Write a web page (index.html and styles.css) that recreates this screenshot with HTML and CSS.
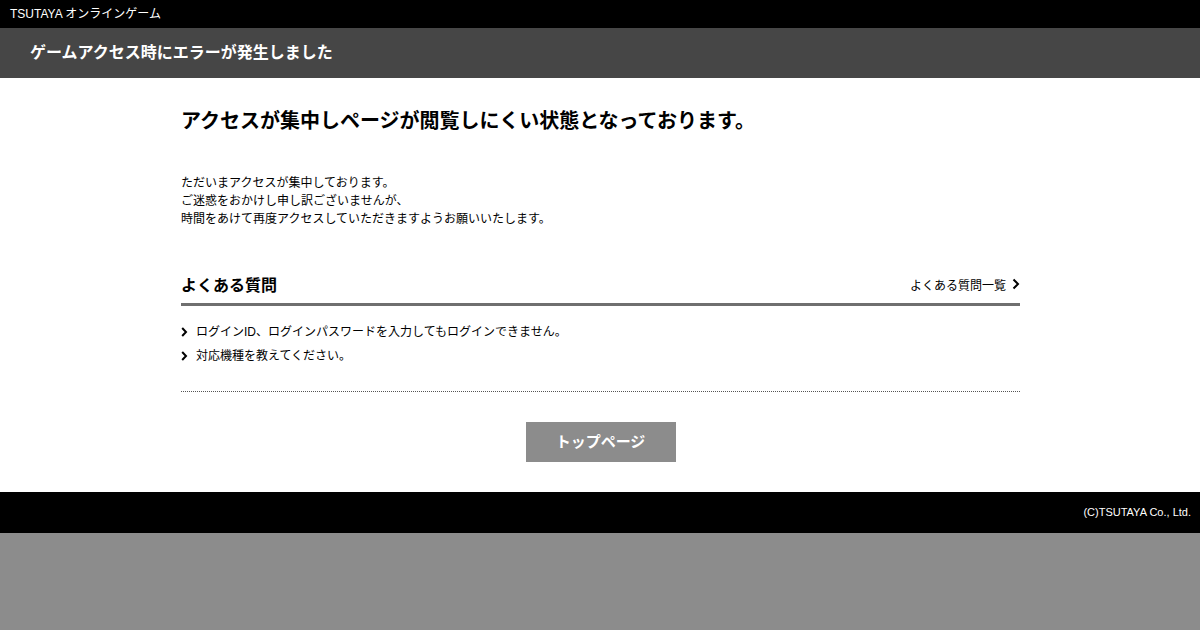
FILE: index.html
```html
<!DOCTYPE html>
<html lang="ja">
<head>
    <meta charset="UTF-8">
    <title>ゲームアクセス時にエラーが発生しました</title>
    <link rel="stylesheet" href="styles.css">
</head>
<body>
    <div class="topbar">TSUTAYA オンラインゲーム</div>
    <div class="page-title">ゲームアクセス時にエラーが発生しました</div>

    <div class="main">
        <div class="container">
            <h1 class="lead">アクセスが集中しページが閲覧しにくい状態となっております。</h1>
            <p class="message">
                ただいまアクセスが集中しております。<br>
                ご迷惑をおかけし申し訳ございませんが、<br>
                時間をあけて再度アクセスしていただきますようお願いいたします。
            </p>

            <div class="faq">
                <div class="faq-head">
                    <h2>よくある質問</h2>
                    <a class="more" href="#">よくある質問一覧
                        <svg width="8" height="12" viewBox="0 0 8 12"><path d="M1.5 1.5 6 6l-4.5 4.5" fill="none" stroke="#000" stroke-width="2"/></svg>
                    </a>
                </div>
                <ul class="faq-list">
                    <li><svg width="7" height="10" viewBox="0 0 7 10"><path d="M1.2 1 5 5 1.2 9" fill="none" stroke="#000" stroke-width="2"/></svg>ログインID、ログインパスワードを入力してもログインできません。</li>
                    <li><svg width="7" height="10" viewBox="0 0 7 10"><path d="M1.2 1 5 5 1.2 9" fill="none" stroke="#000" stroke-width="2"/></svg>対応機種を教えてください。</li>
                </ul>
            </div>

            <div class="btn-area">
                <a class="btn" href="#">トップページ</a>
            </div>
        </div>
    </div>

    <div class="footer">(C)TSUTAYA Co., Ltd.</div>
</body>
</html>
```

FILE: styles.css
```css
* {
    margin: 0;
    padding: 0;
    box-sizing: border-box;
}

body {
    font-family: "Liberation Sans", Arial, "Noto Sans CJK JP", sans-serif;
    background: #8c8c8c;
    color: #000;
}

.topbar {
    background: #000;
    color: #fff;
    font-size: 12px;
    height: 28px;
    line-height: 28px;
    padding-left: 10px;
}

.page-title {
    background: #464646;
    color: #fff;
    font-size: 16px;
    font-weight: bold;
    height: 50px;
    line-height: 50px;
    padding-left: 30px;
}

.main {
    background: #fff;
    padding: 28px 0 30px;
}

.container {
    width: 839px;
    margin: 0 0 0 181px;
}

.lead {
    font-size: 20px;
    font-weight: bold;
    line-height: 30px;
}

.message {
    margin-top: 38px;
    font-size: 12px;
    line-height: 18px;
}

.faq {
    margin-top: 45px;
    border-bottom: 1px dotted #555;
    padding-bottom: 23px;
}

.faq-head {
    display: flex;
    justify-content: space-between;
    align-items: center;
    border-bottom: 3px solid #6f6f6f;
    height: 33px;
    padding-bottom: 8px;
}

.faq-head h2 {
    font-size: 16px;
    font-weight: bold;
}

.more {
    color: #000;
    text-decoration: none;
    font-size: 12px;
    display: flex;
    align-items: center;
    gap: 6px;
}

.faq-list {
    list-style: none;
    margin-top: 14px;
}

.faq-list li {
    font-size: 12px;
    line-height: 24px;
    display: flex;
    align-items: center;
    gap: 8px;
}

.btn-area {
    display: flex;
    justify-content: center;
    margin-top: 30px;
}

.btn {
    display: block;
    width: 150px;
    height: 40px;
    line-height: 40px;
    text-align: center;
    background: #8c8c8c;
    color: #fff;
    font-size: 15px;
    font-weight: bold;
    text-decoration: none;
}

.footer {
    background: #000;
    color: #fff;
    font-size: 11px;
    height: 41px;
    line-height: 41px;
    text-align: right;
    padding-right: 9px;
}
```
